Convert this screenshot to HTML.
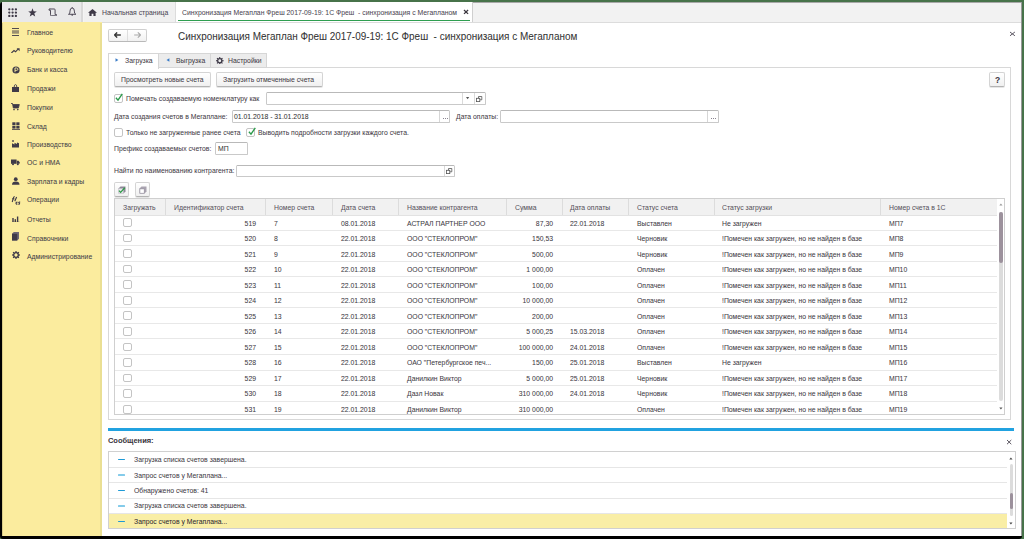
<!DOCTYPE html>
<html><head><meta charset="utf-8"><style>
html,body{margin:0;padding:0;}
body{width:1024px;height:539px;overflow:hidden;position:relative;background:#47734a;font-family:"Liberation Sans",sans-serif;}
.t{position:absolute;white-space:nowrap;-webkit-text-stroke:0.04px currentColor;}
.r{position:absolute;}
</style></head><body>
<div class="r" style="left:0.00px;top:2.00px;width:1022.00px;height:537.00px;background:#000;border-radius:3px 0 3px 3px;"></div>
<div class="r" style="left:2.00px;top:2.00px;width:1020.00px;height:534.00px;background:#fff;"></div>
<div class="r" style="left:1021.00px;top:2.00px;width:1.00px;height:534.00px;background:#9a9a9a;"></div>
<div class="r" style="left:2.00px;top:2.00px;width:1019.00px;height:20.00px;background:#f2f2f2;"></div>
<div class="r" style="left:2.00px;top:2.00px;width:1019.00px;height:1.00px;background:#a8a8a8;"></div>
<div class="r" style="left:2.00px;top:2.00px;width:79.00px;height:20.00px;background:#e9e9ea;"></div>
<div class="r" style="left:80.60px;top:2.00px;width:2.00px;height:20.00px;background:#d8d8d8;"></div>
<div class="r" style="left:82.60px;top:2.00px;width:1.00px;height:20.00px;background:#f4f4f4;"></div>
<div class="r" style="left:83.60px;top:2.00px;width:91.70px;height:20.00px;background:#f0f0f0;"></div>
<div class="r" style="left:175.30px;top:2.00px;width:1.00px;height:20.00px;background:#dcdcdc;"></div>
<div class="r" style="left:176.30px;top:2.00px;width:296.00px;height:20.00px;background:#ffffff;"></div>
<div class="r" style="left:472.30px;top:2.00px;width:1.00px;height:20.00px;background:#cfcfcf;"></div>
<div class="r" style="left:102.00px;top:21.60px;width:919.00px;height:1.00px;background:#dcdcdc;"></div>
<div class="r" style="left:178.00px;top:19.70px;width:292.30px;height:1.50px;background:#2e9e50;"></div>
<svg class="r" style="left:7.80px;top:7.60px" width="9.5" height="9.5" viewBox="0 0 9.5 9.5"><circle cx="1.30" cy="1.30" r="1.15" fill="#3f3a48"/><circle cx="4.60" cy="1.30" r="1.15" fill="#3f3a48"/><circle cx="7.90" cy="1.30" r="1.15" fill="#3f3a48"/><circle cx="1.30" cy="4.60" r="1.15" fill="#3f3a48"/><circle cx="4.60" cy="4.60" r="1.15" fill="#3f3a48"/><circle cx="7.90" cy="4.60" r="1.15" fill="#3f3a48"/><circle cx="1.30" cy="7.90" r="1.15" fill="#3f3a48"/><circle cx="4.60" cy="7.90" r="1.15" fill="#3f3a48"/><circle cx="7.90" cy="7.90" r="1.15" fill="#3f3a48"/></svg>
<svg class="r" style="left:27.80px;top:7.90px" width="9" height="9" viewBox="0 0 9 9"><path d="M4.5 0.3 L5.6 3.3 L8.8 3.4 L6.3 5.3 L7.2 8.5 L4.5 6.7 L1.8 8.5 L2.7 5.3 L0.2 3.4 L3.4 3.3 Z" fill="#3f3a48"/></svg>
<svg class="r" style="left:47.80px;top:7.60px" width="9.5" height="8.6" viewBox="0 0 9.5 8.6"><path d="M1.5 1 H6.3 Q7.1 1 7.1 1.9 V6.6 H8.6 Q8.8 7.8 7.5 7.8 H3.3 Q2.5 7.8 2.5 6.8 V2.3 M2.2 1 Q0.6 0.9 0.9 2.1 Q1.3 2.6 2.5 2.4" fill="none" stroke="#3f3a48" stroke-width="0.9"/></svg>
<svg class="r" style="left:67.80px;top:7.40px" width="8.4" height="8.8" viewBox="0 0 8.4 8.8"><path d="M4.2 0.9 Q6.4 1.1 6.4 4.1 L6.6 6.2 L7.9 7.3 H0.5 L1.8 6.2 L2.0 4.1 Q2.0 1.1 4.2 0.9 Z" fill="none" stroke="#3f3a48" stroke-width="0.9"/><circle cx="4.2" cy="0.8" r="0.6" fill="#3f3a48"/><circle cx="4.2" cy="8" r="0.8" fill="#3f3a48"/></svg>
<svg class="r" style="left:87.80px;top:9.00px" width="9" height="7" viewBox="0 0 9 7"><path d="M4.5 0 L9 3.8 H7.6 V7 H5.4 V4.8 H3.6 V7 H1.4 V3.8 H0 Z" fill="#3f3a48"/></svg>
<div class="t" style="left:101.70px;top:9.00px;font-size:8.0px;line-height:8.0px;color:#4a4652;letter-spacing:0px;transform:scaleX(0.855);transform-origin:0 0;">Начальная страница</div>
<div class="t" style="left:181.90px;top:9.00px;font-size:8.0px;line-height:8.0px;color:#4a4652;letter-spacing:0px;transform:scaleX(0.855);transform-origin:0 0;">Синхронизация Мегаплан Фреш 2017-09-19: 1С Фреш&nbsp; - синхронизация с Мегапланом</div>
<svg class="r" style="left:462.90px;top:9.00px" width="6.1" height="5.9" viewBox="0 0 6.1 5.9"><path d="M1 1 L5.10 4.90 M5.10 1 L1 4.90" stroke="#3d3840" stroke-width="1.3" fill="none"/></svg>
<div class="r" style="left:2.00px;top:21.60px;width:100.00px;height:514.40px;background:#fbec9e;"></div>
<div class="r" style="left:100.00px;top:22.60px;width:2.00px;height:513.40px;background:#eadf93;"></div>
<div class="r" style="left:2.00px;top:22.60px;width:1.00px;height:513.40px;background:#d9cc88;"></div>
<div class="t" style="left:27.40px;top:29.00px;font-size:8.0px;line-height:8.0px;color:#423d48;letter-spacing:0px;transform:scaleX(0.855);transform-origin:0 0;">Главное</div>
<div class="t" style="left:27.40px;top:47.00px;font-size:8.0px;line-height:8.0px;color:#423d48;letter-spacing:0px;transform:scaleX(0.855);transform-origin:0 0;">Руководителю</div>
<div class="t" style="left:27.40px;top:66.00px;font-size:8.0px;line-height:8.0px;color:#423d48;letter-spacing:0px;transform:scaleX(0.855);transform-origin:0 0;">Банк и касса</div>
<div class="t" style="left:27.40px;top:85.00px;font-size:8.0px;line-height:8.0px;color:#423d48;letter-spacing:0px;transform:scaleX(0.855);transform-origin:0 0;">Продажи</div>
<div class="t" style="left:27.40px;top:104.00px;font-size:8.0px;line-height:8.0px;color:#423d48;letter-spacing:0px;transform:scaleX(0.855);transform-origin:0 0;">Покупки</div>
<div class="t" style="left:27.40px;top:123.00px;font-size:8.0px;line-height:8.0px;color:#423d48;letter-spacing:0px;transform:scaleX(0.855);transform-origin:0 0;">Склад</div>
<div class="t" style="left:27.40px;top:141.00px;font-size:8.0px;line-height:8.0px;color:#423d48;letter-spacing:0px;transform:scaleX(0.855);transform-origin:0 0;">Производство</div>
<div class="t" style="left:27.40px;top:159.00px;font-size:8.0px;line-height:8.0px;color:#423d48;letter-spacing:0px;transform:scaleX(0.855);transform-origin:0 0;">ОС и НМА</div>
<div class="t" style="left:27.40px;top:178.00px;font-size:8.0px;line-height:8.0px;color:#423d48;letter-spacing:0px;transform:scaleX(0.855);transform-origin:0 0;">Зарплата и кадры</div>
<div class="t" style="left:27.40px;top:196.00px;font-size:8.0px;line-height:8.0px;color:#423d48;letter-spacing:0px;transform:scaleX(0.855);transform-origin:0 0;">Операции</div>
<div class="t" style="left:27.40px;top:216.00px;font-size:8.0px;line-height:8.0px;color:#423d48;letter-spacing:0px;transform:scaleX(0.855);transform-origin:0 0;">Отчеты</div>
<div class="t" style="left:27.40px;top:235.00px;font-size:8.0px;line-height:8.0px;color:#423d48;letter-spacing:0px;transform:scaleX(0.855);transform-origin:0 0;">Справочники</div>
<div class="t" style="left:27.40px;top:253.00px;font-size:8.0px;line-height:8.0px;color:#423d48;letter-spacing:0px;transform:scaleX(0.855);transform-origin:0 0;">Администрирование</div>
<svg class="r" style="left:11.90px;top:28.10px" width="7.5" height="8" viewBox="0 0 7.5 8"><rect x="0" y="0" width="7.5" height="0.9" fill="#3f3a48"/><rect x="0" y="2.2" width="7.5" height="3.5" fill="#9b9070"/><rect x="0" y="7" width="7.5" height="0.9" fill="#3f3a48"/></svg>
<svg class="r" style="left:11.20px;top:47.60px" width="9" height="5.5" viewBox="0 0 9 5.5"><path d="M0.4 5 L3 2.5 L4.6 3.8 L7 1.2" fill="none" stroke="#3f3a48" stroke-width="1.1"/><path d="M5.6 0.3 H8.6 V3.3 Z" fill="#3f3a48"/></svg>
<svg class="r" style="left:11.80px;top:65.50px" width="8" height="8" viewBox="0 0 8 8"><circle cx="4" cy="4" r="3.6" fill="#3f3a48"/><path d="M3 6.2 V2 H4.6 Q5.9 2 5.9 3.2 Q5.9 4.4 4.6 4.4 H3" fill="none" stroke="#fbec9e" stroke-width="0.9"/></svg>
<svg class="r" style="left:12.00px;top:83.60px" width="7" height="8" viewBox="0 0 7 8"><rect x="0" y="3" width="7" height="5" fill="#3f3a48"/><path d="M2.2 3 Q2.2 0.6 3.5 0.6 Q4.8 0.6 4.8 3" fill="none" stroke="#3f3a48" stroke-width="0.9"/></svg>
<svg class="r" style="left:11.40px;top:103.00px" width="8.5" height="7.5" viewBox="0 0 8.5 7.5"><path d="M0 0.5 H1.5 L2.3 5 H7.4 L8.3 1.5 H1.8" fill="#3f3a48" stroke="#3f3a48" stroke-width="0.8"/><circle cx="3" cy="6.6" r="0.8" fill="#3f3a48"/><circle cx="6.8" cy="6.6" r="0.8" fill="#3f3a48"/></svg>
<svg class="r" style="left:11.60px;top:121.60px" width="8" height="8" viewBox="0 0 8 8"><rect x="0.3" y="0.3" width="3.2" height="2.8" fill="#3f3a48"/><rect x="4.3" y="0.3" width="3.2" height="2.8" fill="#3f3a48"/><rect x="0.3" y="3.8" width="3.2" height="2.8" fill="#3f3a48"/><rect x="4.3" y="3.8" width="3.2" height="2.8" fill="#3f3a48"/><rect x="0" y="7.2" width="8" height="0.8" fill="#3f3a48"/></svg>
<svg class="r" style="left:12.00px;top:140.20px" width="7.5" height="7.5" viewBox="0 0 7.5 7.5"><path d="M0 7.5 V3.2 L2.5 4.5 V2.8 L5 4 V2.5 L7 3.2 V7.5 Z" fill="#3f3a48"/><rect x="0.2" y="0.2" width="1.6" height="1.6" fill="#3f3a48"/></svg>
<svg class="r" style="left:11.20px;top:159.00px" width="9" height="6.5" viewBox="0 0 9 6.5"><rect x="0" y="0.5" width="5.6" height="4.3" fill="#3f3a48"/><path d="M5.9 1.8 H7.6 L8.6 3.2 V4.8 H5.9 Z" fill="#3f3a48"/><circle cx="2" cy="5.3" r="1" fill="#3f3a48"/><circle cx="6.8" cy="5.3" r="1" fill="#3f3a48"/></svg>
<svg class="r" style="left:12.00px;top:177.20px" width="7.5" height="8" viewBox="0 0 7.5 8"><circle cx="3.75" cy="2.2" r="1.9" fill="#3f3a48"/><path d="M0 7.8 Q0 4.6 3.75 4.6 Q7.5 4.6 7.5 7.8 Z" fill="#3f3a48"/></svg>
<svg class="r" style="left:11.00px;top:195.80px" width="10" height="9" viewBox="0 0 10 9"><g fill="none" stroke="#3f3a48" stroke-width="1.1"><path d="M1.2 6 L2.6 1.4 Q2.9 0.6 3.8 0.8"/><path d="M1.2 2.8 H3.4"/><path d="M3.8 5.2 L5.6 1"/><path d="M6.6 6.3 Q5.2 5.9 5.0 7.2 Q5.1 8.4 6.4 8.0"/><path d="M9.2 6.2 Q8 5.8 7.7 6.6 Q8.6 7.2 8.6 7.6 Q8.4 8.5 7.3 8.1"/></g></svg>
<svg class="r" style="left:12.00px;top:215.50px" width="7.5" height="6.5" viewBox="0 0 7.5 6.5"><rect x="0.3" y="2" width="1.4" height="4" fill="#3f3a48"/><rect x="2.6" y="3.2" width="1.4" height="2.8" fill="#3f3a48"/><rect x="4.9" y="0.5" width="1.4" height="5.5" fill="#3f3a48"/><rect x="0" y="5.8" width="7.5" height="0.7" fill="#3f3a48"/></svg>
<svg class="r" style="left:12.20px;top:232.20px" width="7" height="8.5" viewBox="0 0 7 8.5"><path d="M0 1.8 L1.8 0 H7 V6.8 L5.2 8.5 H0 Z" fill="#6d6674"/><rect x="0" y="1.8" width="5.2" height="6.7" fill="#3f3a48"/></svg>
<svg class="r" style="left:11.90px;top:251.30px" width="8" height="8" viewBox="0 0 8 8"><circle cx="4" cy="4" r="2.3" fill="none" stroke="#3f3a48" stroke-width="1.3"/><rect x="3.4" y="-0.1" width="1.2" height="2" fill="#3f3a48" transform="rotate(0 4 4)"/><rect x="3.4" y="-0.1" width="1.2" height="2" fill="#3f3a48" transform="rotate(45 4 4)"/><rect x="3.4" y="-0.1" width="1.2" height="2" fill="#3f3a48" transform="rotate(90 4 4)"/><rect x="3.4" y="-0.1" width="1.2" height="2" fill="#3f3a48" transform="rotate(135 4 4)"/><rect x="3.4" y="-0.1" width="1.2" height="2" fill="#3f3a48" transform="rotate(180 4 4)"/><rect x="3.4" y="-0.1" width="1.2" height="2" fill="#3f3a48" transform="rotate(225 4 4)"/><rect x="3.4" y="-0.1" width="1.2" height="2" fill="#3f3a48" transform="rotate(270 4 4)"/><rect x="3.4" y="-0.1" width="1.2" height="2" fill="#3f3a48" transform="rotate(315 4 4)"/></svg>
<div class="r" style="left:108.30px;top:29.00px;width:38.60px;height:12.50px;background:linear-gradient(#ffffff,#f1f1f1);border:1px solid #cfcfcf;border-bottom-color:#b9b9b9;border-radius:2px;box-sizing:border-box;"></div>
<div class="r" style="left:127.20px;top:30.00px;width:1.00px;height:10.50px;background:#dedede;"></div>
<svg class="r" style="left:114.20px;top:32.30px" width="7" height="6" viewBox="0 0 7 6"><path d="M0.3 3 L3.2 0.4 M0.3 3 L3.2 5.6 M0.5 3 H6.8" fill="none" stroke="#333" stroke-width="1.3"/></svg>
<svg class="r" style="left:133.50px;top:32.30px" width="7" height="6" viewBox="0 0 7 6"><path d="M6.7 3 L3.8 0.4 M6.7 3 L3.8 5.6 M6.5 3 H0.2" fill="none" stroke="#a9a9a9" stroke-width="1.1"/></svg>
<div class="t" style="left:178.00px;top:32.00px;font-size:10px;line-height:10px;color:#333333;letter-spacing:0px;transform:scaleX(0.993);transform-origin:0 0;">Синхронизация Мегаплан Фреш 2017-09-19: 1С Фреш&nbsp; - синхронизация с Мегапланом</div>
<svg class="r" style="left:1009.00px;top:31.00px" width="6.9" height="5.8" viewBox="0 0 6.9 5.8"><path d="M1 1 L5.90 4.80 M5.90 1 L1 4.80" stroke="#5a5560" stroke-width="1.0" fill="none"/></svg>
<div class="r" style="left:108.00px;top:67.40px;width:902.70px;height:352.60px;border:1px solid #d8d8d8;box-sizing:border-box;background:#fff;"></div>
<div class="r" style="left:158.30px;top:53.40px;width:53.00px;height:15.00px;background:#ececec;border:1px solid #d6d6d6;box-sizing:border-box;"></div>
<div class="r" style="left:210.30px;top:53.40px;width:56.70px;height:15.00px;background:#ececec;border:1px solid #d6d6d6;box-sizing:border-box;"></div>
<div class="r" style="left:108.00px;top:53.40px;width:51.30px;height:15.60px;background:#fff;border:1px solid #d6d6d6;border-bottom:none;box-sizing:border-box;"></div>
<svg class="r" style="left:115.00px;top:58.30px" width="4" height="4.5" viewBox="0 0 4 4.5"><path d="M0.5 0.2 L3.4 2 L0.5 3.8 Z" fill="#3a7cc8"/></svg>
<svg class="r" style="left:165.80px;top:58.30px" width="4" height="4.5" viewBox="0 0 4 4.5"><path d="M3.4 0.2 L0.5 2 L3.4 3.8 Z" fill="#3a7cc8"/></svg>
<div class="t" style="left:124.90px;top:57.00px;font-size:8.0px;line-height:8.0px;color:#3f3a45;letter-spacing:0px;transform:scaleX(0.855);transform-origin:0 0;">Загрузка</div>
<div class="t" style="left:176.00px;top:57.00px;font-size:8.0px;line-height:8.0px;color:#3f3a45;letter-spacing:0px;transform:scaleX(0.855);transform-origin:0 0;">Выгрузка</div>
<svg class="r" style="left:216.00px;top:56.80px" width="7.5" height="7.5" viewBox="0 0 7.5 7.5"><circle cx="3.75" cy="3.75" r="2.1" fill="none" stroke="#3f3a48" stroke-width="1.3"/><rect x="3.2" y="-0.1" width="1.1" height="1.9" fill="#3f3a48" transform="rotate(0 3.75 3.75)"/><rect x="3.2" y="-0.1" width="1.1" height="1.9" fill="#3f3a48" transform="rotate(45 3.75 3.75)"/><rect x="3.2" y="-0.1" width="1.1" height="1.9" fill="#3f3a48" transform="rotate(90 3.75 3.75)"/><rect x="3.2" y="-0.1" width="1.1" height="1.9" fill="#3f3a48" transform="rotate(135 3.75 3.75)"/><rect x="3.2" y="-0.1" width="1.1" height="1.9" fill="#3f3a48" transform="rotate(180 3.75 3.75)"/><rect x="3.2" y="-0.1" width="1.1" height="1.9" fill="#3f3a48" transform="rotate(225 3.75 3.75)"/><rect x="3.2" y="-0.1" width="1.1" height="1.9" fill="#3f3a48" transform="rotate(270 3.75 3.75)"/><rect x="3.2" y="-0.1" width="1.1" height="1.9" fill="#3f3a48" transform="rotate(315 3.75 3.75)"/></svg>
<div class="t" style="left:227.70px;top:57.00px;font-size:8.0px;line-height:8.0px;color:#3f3a45;letter-spacing:0px;transform:scaleX(0.855);transform-origin:0 0;">Настройки</div>
<div class="r" style="left:114.10px;top:72.30px;width:97.40px;height:14.50px;background:linear-gradient(#ffffff,#f0f0f0);border:1px solid #d4d4d4;border-bottom-color:#b3b3b3;border-radius:2px;box-sizing:border-box;box-shadow:0 1px 0 #e6e6e6;"></div>
<div class="t" style="left:121.30px;top:76.00px;font-size:8.0px;line-height:8.0px;color:#3f3a45;letter-spacing:0px;transform:scaleX(0.855);transform-origin:0 0;">Просмотреть новые счета</div>
<div class="r" style="left:216.20px;top:72.30px;width:106.40px;height:14.50px;background:linear-gradient(#ffffff,#f0f0f0);border:1px solid #d4d4d4;border-bottom-color:#b3b3b3;border-radius:2px;box-sizing:border-box;box-shadow:0 1px 0 #e6e6e6;"></div>
<div class="t" style="left:223.30px;top:76.00px;font-size:8.0px;line-height:8.0px;color:#3f3a45;letter-spacing:0px;transform:scaleX(0.855);transform-origin:0 0;">Загрузить отмеченные счета</div>
<div class="r" style="left:989.40px;top:72.30px;width:16.10px;height:14.50px;background:linear-gradient(#ffffff,#f0f0f0);border:1px solid #d4d4d4;border-bottom-color:#b3b3b3;border-radius:2px;box-sizing:border-box;box-shadow:0 1px 0 #e6e6e6;"></div>
<div class="t" style="left:995.00px;top:76.00px;font-size:8.5px;line-height:8.5px;color:#3d3843;letter-spacing:0px;transform-origin:0 0;font-weight:bold;">?</div>
<div class="r" style="left:113.90px;top:94.40px;width:8.80px;height:8.70px;border:1px solid #c4c4c4;border-radius:2px;box-sizing:border-box;background:#fff;"></div>
<svg class="r" style="left:115.30px;top:93.30px" width="8" height="8.5" viewBox="0 0 8 8.5"><path d="M0.9 4.8 L3 7.2 L7.3 0.8" fill="none" stroke="#2a9a4a" stroke-width="1.35"/></svg>
<div class="t" style="left:125.60px;top:95.00px;font-size:8.0px;line-height:8.0px;color:#3f3a45;letter-spacing:0px;transform:scaleX(0.855);transform-origin:0 0;">Помечать создаваемую номенклатуру как</div>
<div class="r" style="left:266.20px;top:92.20px;width:219.40px;height:12.60px;border:1px solid #c9c9c9;border-top-color:#b9b9b9;border-radius:1.5px;box-sizing:border-box;background:#fff;"></div>
<div class="r" style="left:462.20px;top:93.20px;width:1.00px;height:10.60px;background:#dadada;"></div>
<div class="r" style="left:473.80px;top:93.20px;width:1.00px;height:10.60px;background:#dadada;"></div>
<svg class="r" style="left:466.30px;top:97.30px" width="3.5" height="3" viewBox="0 0 3.5 3"><path d="M0 0 H3.2 L1.6 2.2 Z" fill="#555"/></svg>
<svg class="r" style="left:476.40px;top:95.60px" width="6.5" height="6" viewBox="0 0 6.5 6"><rect x="0.5" y="2.3" width="3.3" height="3.3" fill="none" stroke="#555" stroke-width="0.8"/><path d="M2.5 2.3 V0.5 H5.8 V3.8 H3.8" fill="none" stroke="#555" stroke-width="0.8"/></svg>
<div class="t" style="left:114.00px;top:113.00px;font-size:8.0px;line-height:8.0px;color:#3f3a45;letter-spacing:0px;transform:scaleX(0.855);transform-origin:0 0;">Дата создания счетов в Мегаплане:</div>
<div class="r" style="left:231.50px;top:110.20px;width:218.90px;height:12.80px;border:1px solid #c9c9c9;border-top-color:#b9b9b9;border-radius:1.5px;box-sizing:border-box;background:#fff;"></div>
<div class="r" style="left:439.40px;top:111.20px;width:1.00px;height:10.80px;background:#d6d6d6;"></div>
<div class="r" style="left:443.00px;top:118.00px;width:1.00px;height:1.00px;background:#8a8590;"></div>
<div class="r" style="left:445.00px;top:118.00px;width:1.00px;height:1.00px;background:#8a8590;"></div>
<div class="r" style="left:447.00px;top:118.00px;width:1.00px;height:1.00px;background:#8a8590;"></div>
<div class="t" style="left:234.00px;top:113.00px;font-size:8.0px;line-height:8.0px;color:#333;letter-spacing:0px;transform:scaleX(0.855);transform-origin:0 0;">01.01.2018 - 31.01.2018</div>
<div class="t" style="left:455.70px;top:113.00px;font-size:8.0px;line-height:8.0px;color:#3f3a45;letter-spacing:0px;transform:scaleX(0.855);transform-origin:0 0;">Дата оплаты:</div>
<div class="r" style="left:500.30px;top:110.20px;width:218.60px;height:12.80px;border:1px solid #c9c9c9;border-top-color:#b9b9b9;border-radius:1.5px;box-sizing:border-box;background:#fff;"></div>
<div class="r" style="left:707.30px;top:111.20px;width:1.00px;height:10.80px;background:#d6d6d6;"></div>
<div class="r" style="left:711.00px;top:118.00px;width:1.00px;height:1.00px;background:#8a8590;"></div>
<div class="r" style="left:713.00px;top:118.00px;width:1.00px;height:1.00px;background:#8a8590;"></div>
<div class="r" style="left:715.00px;top:118.00px;width:1.00px;height:1.00px;background:#8a8590;"></div>
<div class="r" style="left:113.90px;top:128.30px;width:8.80px;height:8.70px;border:1px solid #c4c4c4;border-radius:2px;box-sizing:border-box;background:#fff;"></div>
<div class="t" style="left:125.60px;top:129.00px;font-size:8.0px;line-height:8.0px;color:#3f3a45;letter-spacing:0px;transform:scaleX(0.855);transform-origin:0 0;">Только не загруженные ранее счета</div>
<div class="r" style="left:246.30px;top:128.30px;width:8.80px;height:8.70px;border:1px solid #c4c4c4;border-radius:2px;box-sizing:border-box;background:#fff;"></div>
<svg class="r" style="left:247.70px;top:127.20px" width="8" height="8.5" viewBox="0 0 8 8.5"><path d="M0.9 4.8 L3 7.2 L7.3 0.8" fill="none" stroke="#2a9a4a" stroke-width="1.35"/></svg>
<div class="t" style="left:257.90px;top:129.00px;font-size:8.0px;line-height:8.0px;color:#3f3a45;letter-spacing:0px;transform:scaleX(0.855);transform-origin:0 0;">Выводить подробности загрузки каждого счета.</div>
<div class="t" style="left:114.00px;top:145.00px;font-size:8.0px;line-height:8.0px;color:#3f3a45;letter-spacing:0px;transform:scaleX(0.855);transform-origin:0 0;">Префикс создаваемых счетов:</div>
<div class="r" style="left:215.10px;top:142.30px;width:32.50px;height:12.90px;border:1px solid #c9c9c9;border-top-color:#b9b9b9;border-radius:1.5px;box-sizing:border-box;background:#fff;"></div>
<div class="t" style="left:217.60px;top:145.00px;font-size:8.0px;line-height:8.0px;color:#333;letter-spacing:0px;transform:scaleX(0.855);transform-origin:0 0;">МП</div>
<div class="t" style="left:113.90px;top:167.00px;font-size:8.0px;line-height:8.0px;color:#3f3a45;letter-spacing:0px;transform:scaleX(0.855);transform-origin:0 0;">Найти по наименованию контрагента:</div>
<div class="r" style="left:236.20px;top:164.70px;width:218.50px;height:12.60px;border:1px solid #c9c9c9;border-top-color:#b9b9b9;border-radius:1.5px;box-sizing:border-box;background:#fff;"></div>
<div class="r" style="left:443.60px;top:165.70px;width:1.00px;height:10.60px;background:#dadada;"></div>
<svg class="r" style="left:446.30px;top:168.00px" width="6.5" height="6" viewBox="0 0 6.5 6"><rect x="0.5" y="2.3" width="3.3" height="3.3" fill="none" stroke="#555" stroke-width="0.8"/><path d="M2.5 2.3 V0.5 H5.8 V3.8 H3.8" fill="none" stroke="#555" stroke-width="0.8"/></svg>
<div class="r" style="left:113.90px;top:182.40px;width:15.60px;height:14.20px;background:linear-gradient(#ffffff,#f0f0f0);border:1px solid #d4d4d4;border-bottom-color:#b3b3b3;border-radius:2px;box-sizing:border-box;box-shadow:0 1px 0 #e6e6e6;"></div>
<div class="r" style="left:134.70px;top:182.40px;width:15.60px;height:14.20px;background:linear-gradient(#ffffff,#f0f0f0);border:1px solid #d4d4d4;border-bottom-color:#b3b3b3;border-radius:2px;box-sizing:border-box;box-shadow:0 1px 0 #e6e6e6;"></div>
<svg class="r" style="left:117.50px;top:185.50px" width="8" height="8" viewBox="0 0 8 8"><path d="M0.5 2.5 L2.5 0.5 H7.5 V5.5 L5.5 7.5 H0.5 Z" fill="#8e8898"/><rect x="0.5" y="2.5" width="5" height="5" fill="#e8e8ec"/><path d="M1 4.6 L2.6 6.4 L6.8 1.8" fill="none" stroke="#2e9a47" stroke-width="1.3"/></svg>
<svg class="r" style="left:138.60px;top:185.50px" width="8" height="8" viewBox="0 0 8 8"><path d="M0.5 2.5 L2.5 0.5 H7.5 V5.5 L5.5 7.5 H0.5 Z" fill="#a9a3b0"/><rect x="0.9" y="2.9" width="4.3" height="4.3" fill="#fff" stroke="#8e8898" stroke-width="0.6"/></svg>
<div class="r" style="left:113.80px;top:198.20px;width:891.20px;height:216.40px;border:1px solid #cfcfcf;box-sizing:border-box;background:#fff;"></div>
<div class="r" style="left:114.80px;top:199.20px;width:882.00px;height:15.40px;background:#f1f1f1;"></div>
<div class="r" style="left:114.80px;top:214.60px;width:882.00px;height:1.00px;background:#e2e2e2;"></div>
<div class="r" style="left:164.60px;top:199.20px;width:1.00px;height:15.40px;background:#dcdcdc;"></div>
<div class="r" style="left:265.40px;top:199.20px;width:1.00px;height:15.40px;background:#dcdcdc;"></div>
<div class="r" style="left:332.20px;top:199.20px;width:1.00px;height:15.40px;background:#dcdcdc;"></div>
<div class="r" style="left:398.00px;top:199.20px;width:1.00px;height:15.40px;background:#dcdcdc;"></div>
<div class="r" style="left:506.40px;top:199.20px;width:1.00px;height:15.40px;background:#dcdcdc;"></div>
<div class="r" style="left:561.90px;top:199.20px;width:1.00px;height:15.40px;background:#dcdcdc;"></div>
<div class="r" style="left:627.70px;top:199.20px;width:1.00px;height:15.40px;background:#dcdcdc;"></div>
<div class="r" style="left:713.50px;top:199.20px;width:1.00px;height:15.40px;background:#dcdcdc;"></div>
<div class="r" style="left:880.40px;top:199.20px;width:1.00px;height:15.40px;background:#dcdcdc;"></div>
<div class="t" style="left:122.80px;top:204.00px;font-size:8.0px;line-height:8.0px;color:#57525c;letter-spacing:0px;transform:scaleX(0.855);transform-origin:0 0;">Загружать</div>
<div class="t" style="left:173.50px;top:204.00px;font-size:8.0px;line-height:8.0px;color:#57525c;letter-spacing:0px;transform:scaleX(0.855);transform-origin:0 0;">Идентификатор счета</div>
<div class="t" style="left:273.80px;top:204.00px;font-size:8.0px;line-height:8.0px;color:#57525c;letter-spacing:0px;transform:scaleX(0.855);transform-origin:0 0;">Номер счета</div>
<div class="t" style="left:341.10px;top:204.00px;font-size:8.0px;line-height:8.0px;color:#57525c;letter-spacing:0px;transform:scaleX(0.855);transform-origin:0 0;">Дата счета</div>
<div class="t" style="left:407.20px;top:204.00px;font-size:8.0px;line-height:8.0px;color:#57525c;letter-spacing:0px;transform:scaleX(0.855);transform-origin:0 0;">Название контрагента</div>
<div class="t" style="left:515.10px;top:204.00px;font-size:8.0px;line-height:8.0px;color:#57525c;letter-spacing:0px;transform:scaleX(0.855);transform-origin:0 0;">Сумма</div>
<div class="t" style="left:570.40px;top:204.00px;font-size:8.0px;line-height:8.0px;color:#57525c;letter-spacing:0px;transform:scaleX(0.855);transform-origin:0 0;">Дата оплаты</div>
<div class="t" style="left:636.50px;top:204.00px;font-size:8.0px;line-height:8.0px;color:#57525c;letter-spacing:0px;transform:scaleX(0.855);transform-origin:0 0;">Статус счета</div>
<div class="t" style="left:721.80px;top:204.00px;font-size:8.0px;line-height:8.0px;color:#57525c;letter-spacing:0px;transform:scaleX(0.855);transform-origin:0 0;">Статус загрузки</div>
<div class="t" style="left:889.40px;top:204.00px;font-size:8.0px;line-height:8.0px;color:#57525c;letter-spacing:0px;transform:scaleX(0.855);transform-origin:0 0;">Номер счета в 1С</div>
<div class="r" style="left:114.80px;top:229.56px;width:882.00px;height:1.00px;background:#e8e8e8;"></div>
<div class="r" style="left:122.80px;top:218.10px;width:8.80px;height:8.70px;border:1px solid #c4c4c4;border-radius:2px;box-sizing:border-box;background:#fff;"></div>
<div class="t" style="left:-43.60px;width:300px;text-align:right;top:220.00px;font-size:8.0px;line-height:8.0px;color:#3d3943;letter-spacing:0px;transform:scaleX(0.855);transform-origin:100% 0;">519</div>
<div class="t" style="left:273.80px;top:220.00px;font-size:8.0px;line-height:8.0px;color:#3d3943;letter-spacing:0px;transform:scaleX(0.855);transform-origin:0 0;">7</div>
<div class="t" style="left:341.10px;top:220.00px;font-size:8.0px;line-height:8.0px;color:#3d3943;letter-spacing:0px;transform:scaleX(0.855);transform-origin:0 0;">08.01.2018</div>
<div class="t" style="left:407.20px;top:220.00px;font-size:8.0px;line-height:8.0px;color:#3d3943;letter-spacing:0px;transform:scaleX(0.855);transform-origin:0 0;">АСТРАЛ ПАРТНЕР ООО</div>
<div class="t" style="left:252.80px;width:300px;text-align:right;top:220.00px;font-size:8.0px;line-height:8.0px;color:#3d3943;letter-spacing:0px;transform:scaleX(0.855);transform-origin:100% 0;">87,30</div>
<div class="t" style="left:570.40px;top:220.00px;font-size:8.0px;line-height:8.0px;color:#3d3943;letter-spacing:0px;transform:scaleX(0.855);transform-origin:0 0;">22.01.2018</div>
<div class="t" style="left:636.50px;top:220.00px;font-size:8.0px;line-height:8.0px;color:#3d3943;letter-spacing:0px;transform:scaleX(0.855);transform-origin:0 0;">Выставлен</div>
<div class="t" style="left:721.80px;top:220.00px;font-size:8.0px;line-height:8.0px;color:#3d3943;letter-spacing:0px;transform:scaleX(0.855);transform-origin:0 0;">Не загружен</div>
<div class="t" style="left:889.40px;top:220.00px;font-size:8.0px;line-height:8.0px;color:#3d3943;letter-spacing:0px;transform:scaleX(0.855);transform-origin:0 0;">МП7</div>
<div class="r" style="left:114.80px;top:245.12px;width:882.00px;height:1.00px;background:#e8e8e8;"></div>
<div class="r" style="left:122.80px;top:233.66px;width:8.80px;height:8.70px;border:1px solid #c4c4c4;border-radius:2px;box-sizing:border-box;background:#fff;"></div>
<div class="t" style="left:-43.60px;width:300px;text-align:right;top:235.00px;font-size:8.0px;line-height:8.0px;color:#3d3943;letter-spacing:0px;transform:scaleX(0.855);transform-origin:100% 0;">520</div>
<div class="t" style="left:273.80px;top:235.00px;font-size:8.0px;line-height:8.0px;color:#3d3943;letter-spacing:0px;transform:scaleX(0.855);transform-origin:0 0;">8</div>
<div class="t" style="left:341.10px;top:235.00px;font-size:8.0px;line-height:8.0px;color:#3d3943;letter-spacing:0px;transform:scaleX(0.855);transform-origin:0 0;">22.01.2018</div>
<div class="t" style="left:407.20px;top:235.00px;font-size:8.0px;line-height:8.0px;color:#3d3943;letter-spacing:0px;transform:scaleX(0.855);transform-origin:0 0;">ООО &quot;СТЕКЛОПРОМ&quot;</div>
<div class="t" style="left:252.80px;width:300px;text-align:right;top:235.00px;font-size:8.0px;line-height:8.0px;color:#3d3943;letter-spacing:0px;transform:scaleX(0.855);transform-origin:100% 0;">150,53</div>
<div class="t" style="left:636.50px;top:235.00px;font-size:8.0px;line-height:8.0px;color:#3d3943;letter-spacing:0px;transform:scaleX(0.855);transform-origin:0 0;">Черновик</div>
<div class="t" style="left:721.80px;top:235.00px;font-size:8.0px;line-height:8.0px;color:#3d3943;letter-spacing:0px;transform:scaleX(0.855);transform-origin:0 0;">!Помечен как загружен, но не найден в базе</div>
<div class="t" style="left:889.40px;top:235.00px;font-size:8.0px;line-height:8.0px;color:#3d3943;letter-spacing:0px;transform:scaleX(0.855);transform-origin:0 0;">МП8</div>
<div class="r" style="left:114.80px;top:260.68px;width:882.00px;height:1.00px;background:#e8e8e8;"></div>
<div class="r" style="left:122.80px;top:249.22px;width:8.80px;height:8.70px;border:1px solid #c4c4c4;border-radius:2px;box-sizing:border-box;background:#fff;"></div>
<div class="t" style="left:-43.60px;width:300px;text-align:right;top:251.00px;font-size:8.0px;line-height:8.0px;color:#3d3943;letter-spacing:0px;transform:scaleX(0.855);transform-origin:100% 0;">521</div>
<div class="t" style="left:273.80px;top:251.00px;font-size:8.0px;line-height:8.0px;color:#3d3943;letter-spacing:0px;transform:scaleX(0.855);transform-origin:0 0;">9</div>
<div class="t" style="left:341.10px;top:251.00px;font-size:8.0px;line-height:8.0px;color:#3d3943;letter-spacing:0px;transform:scaleX(0.855);transform-origin:0 0;">22.01.2018</div>
<div class="t" style="left:407.20px;top:251.00px;font-size:8.0px;line-height:8.0px;color:#3d3943;letter-spacing:0px;transform:scaleX(0.855);transform-origin:0 0;">ООО &quot;СТЕКЛОПРОМ&quot;</div>
<div class="t" style="left:252.80px;width:300px;text-align:right;top:251.00px;font-size:8.0px;line-height:8.0px;color:#3d3943;letter-spacing:0px;transform:scaleX(0.855);transform-origin:100% 0;">500,00</div>
<div class="t" style="left:636.50px;top:251.00px;font-size:8.0px;line-height:8.0px;color:#3d3943;letter-spacing:0px;transform:scaleX(0.855);transform-origin:0 0;">Черновик</div>
<div class="t" style="left:721.80px;top:251.00px;font-size:8.0px;line-height:8.0px;color:#3d3943;letter-spacing:0px;transform:scaleX(0.855);transform-origin:0 0;">!Помечен как загружен, но не найден в базе</div>
<div class="t" style="left:889.40px;top:251.00px;font-size:8.0px;line-height:8.0px;color:#3d3943;letter-spacing:0px;transform:scaleX(0.855);transform-origin:0 0;">МП9</div>
<div class="r" style="left:114.80px;top:276.24px;width:882.00px;height:1.00px;background:#e8e8e8;"></div>
<div class="r" style="left:122.80px;top:264.78px;width:8.80px;height:8.70px;border:1px solid #c4c4c4;border-radius:2px;box-sizing:border-box;background:#fff;"></div>
<div class="t" style="left:-43.60px;width:300px;text-align:right;top:266.00px;font-size:8.0px;line-height:8.0px;color:#3d3943;letter-spacing:0px;transform:scaleX(0.855);transform-origin:100% 0;">522</div>
<div class="t" style="left:273.80px;top:266.00px;font-size:8.0px;line-height:8.0px;color:#3d3943;letter-spacing:0px;transform:scaleX(0.855);transform-origin:0 0;">10</div>
<div class="t" style="left:341.10px;top:266.00px;font-size:8.0px;line-height:8.0px;color:#3d3943;letter-spacing:0px;transform:scaleX(0.855);transform-origin:0 0;">22.01.2018</div>
<div class="t" style="left:407.20px;top:266.00px;font-size:8.0px;line-height:8.0px;color:#3d3943;letter-spacing:0px;transform:scaleX(0.855);transform-origin:0 0;">ООО &quot;СТЕКЛОПРОМ&quot;</div>
<div class="t" style="left:252.80px;width:300px;text-align:right;top:266.00px;font-size:8.0px;line-height:8.0px;color:#3d3943;letter-spacing:0px;transform:scaleX(0.855);transform-origin:100% 0;">1 000,00</div>
<div class="t" style="left:636.50px;top:266.00px;font-size:8.0px;line-height:8.0px;color:#3d3943;letter-spacing:0px;transform:scaleX(0.855);transform-origin:0 0;">Оплачен</div>
<div class="t" style="left:721.80px;top:266.00px;font-size:8.0px;line-height:8.0px;color:#3d3943;letter-spacing:0px;transform:scaleX(0.855);transform-origin:0 0;">!Помечен как загружен, но не найден в базе</div>
<div class="t" style="left:889.40px;top:266.00px;font-size:8.0px;line-height:8.0px;color:#3d3943;letter-spacing:0px;transform:scaleX(0.855);transform-origin:0 0;">МП10</div>
<div class="r" style="left:114.80px;top:291.80px;width:882.00px;height:1.00px;background:#e8e8e8;"></div>
<div class="r" style="left:122.80px;top:280.34px;width:8.80px;height:8.70px;border:1px solid #c4c4c4;border-radius:2px;box-sizing:border-box;background:#fff;"></div>
<div class="t" style="left:-43.60px;width:300px;text-align:right;top:282.00px;font-size:8.0px;line-height:8.0px;color:#3d3943;letter-spacing:0px;transform:scaleX(0.855);transform-origin:100% 0;">523</div>
<div class="t" style="left:273.80px;top:282.00px;font-size:8.0px;line-height:8.0px;color:#3d3943;letter-spacing:0px;transform:scaleX(0.855);transform-origin:0 0;">11</div>
<div class="t" style="left:341.10px;top:282.00px;font-size:8.0px;line-height:8.0px;color:#3d3943;letter-spacing:0px;transform:scaleX(0.855);transform-origin:0 0;">22.01.2018</div>
<div class="t" style="left:407.20px;top:282.00px;font-size:8.0px;line-height:8.0px;color:#3d3943;letter-spacing:0px;transform:scaleX(0.855);transform-origin:0 0;">ООО &quot;СТЕКЛОПРОМ&quot;</div>
<div class="t" style="left:252.80px;width:300px;text-align:right;top:282.00px;font-size:8.0px;line-height:8.0px;color:#3d3943;letter-spacing:0px;transform:scaleX(0.855);transform-origin:100% 0;">100,00</div>
<div class="t" style="left:636.50px;top:282.00px;font-size:8.0px;line-height:8.0px;color:#3d3943;letter-spacing:0px;transform:scaleX(0.855);transform-origin:0 0;">Оплачен</div>
<div class="t" style="left:721.80px;top:282.00px;font-size:8.0px;line-height:8.0px;color:#3d3943;letter-spacing:0px;transform:scaleX(0.855);transform-origin:0 0;">!Помечен как загружен, но не найден в базе</div>
<div class="t" style="left:889.40px;top:282.00px;font-size:8.0px;line-height:8.0px;color:#3d3943;letter-spacing:0px;transform:scaleX(0.855);transform-origin:0 0;">МП11</div>
<div class="r" style="left:114.80px;top:307.36px;width:882.00px;height:1.00px;background:#e8e8e8;"></div>
<div class="r" style="left:122.80px;top:295.90px;width:8.80px;height:8.70px;border:1px solid #c4c4c4;border-radius:2px;box-sizing:border-box;background:#fff;"></div>
<div class="t" style="left:-43.60px;width:300px;text-align:right;top:297.00px;font-size:8.0px;line-height:8.0px;color:#3d3943;letter-spacing:0px;transform:scaleX(0.855);transform-origin:100% 0;">524</div>
<div class="t" style="left:273.80px;top:297.00px;font-size:8.0px;line-height:8.0px;color:#3d3943;letter-spacing:0px;transform:scaleX(0.855);transform-origin:0 0;">12</div>
<div class="t" style="left:341.10px;top:297.00px;font-size:8.0px;line-height:8.0px;color:#3d3943;letter-spacing:0px;transform:scaleX(0.855);transform-origin:0 0;">22.01.2018</div>
<div class="t" style="left:407.20px;top:297.00px;font-size:8.0px;line-height:8.0px;color:#3d3943;letter-spacing:0px;transform:scaleX(0.855);transform-origin:0 0;">ООО &quot;СТЕКЛОПРОМ&quot;</div>
<div class="t" style="left:252.80px;width:300px;text-align:right;top:297.00px;font-size:8.0px;line-height:8.0px;color:#3d3943;letter-spacing:0px;transform:scaleX(0.855);transform-origin:100% 0;">10 000,00</div>
<div class="t" style="left:636.50px;top:297.00px;font-size:8.0px;line-height:8.0px;color:#3d3943;letter-spacing:0px;transform:scaleX(0.855);transform-origin:0 0;">Оплачен</div>
<div class="t" style="left:721.80px;top:297.00px;font-size:8.0px;line-height:8.0px;color:#3d3943;letter-spacing:0px;transform:scaleX(0.855);transform-origin:0 0;">!Помечен как загружен, но не найден в базе</div>
<div class="t" style="left:889.40px;top:297.00px;font-size:8.0px;line-height:8.0px;color:#3d3943;letter-spacing:0px;transform:scaleX(0.855);transform-origin:0 0;">МП12</div>
<div class="r" style="left:114.80px;top:322.92px;width:882.00px;height:1.00px;background:#e8e8e8;"></div>
<div class="r" style="left:122.80px;top:311.46px;width:8.80px;height:8.70px;border:1px solid #c4c4c4;border-radius:2px;box-sizing:border-box;background:#fff;"></div>
<div class="t" style="left:-43.60px;width:300px;text-align:right;top:313.00px;font-size:8.0px;line-height:8.0px;color:#3d3943;letter-spacing:0px;transform:scaleX(0.855);transform-origin:100% 0;">525</div>
<div class="t" style="left:273.80px;top:313.00px;font-size:8.0px;line-height:8.0px;color:#3d3943;letter-spacing:0px;transform:scaleX(0.855);transform-origin:0 0;">13</div>
<div class="t" style="left:341.10px;top:313.00px;font-size:8.0px;line-height:8.0px;color:#3d3943;letter-spacing:0px;transform:scaleX(0.855);transform-origin:0 0;">22.01.2018</div>
<div class="t" style="left:407.20px;top:313.00px;font-size:8.0px;line-height:8.0px;color:#3d3943;letter-spacing:0px;transform:scaleX(0.855);transform-origin:0 0;">ООО &quot;СТЕКЛОПРОМ&quot;</div>
<div class="t" style="left:252.80px;width:300px;text-align:right;top:313.00px;font-size:8.0px;line-height:8.0px;color:#3d3943;letter-spacing:0px;transform:scaleX(0.855);transform-origin:100% 0;">200,00</div>
<div class="t" style="left:636.50px;top:313.00px;font-size:8.0px;line-height:8.0px;color:#3d3943;letter-spacing:0px;transform:scaleX(0.855);transform-origin:0 0;">Оплачен</div>
<div class="t" style="left:721.80px;top:313.00px;font-size:8.0px;line-height:8.0px;color:#3d3943;letter-spacing:0px;transform:scaleX(0.855);transform-origin:0 0;">!Помечен как загружен, но не найден в базе</div>
<div class="t" style="left:889.40px;top:313.00px;font-size:8.0px;line-height:8.0px;color:#3d3943;letter-spacing:0px;transform:scaleX(0.855);transform-origin:0 0;">МП13</div>
<div class="r" style="left:114.80px;top:338.48px;width:882.00px;height:1.00px;background:#e8e8e8;"></div>
<div class="r" style="left:122.80px;top:327.02px;width:8.80px;height:8.70px;border:1px solid #c4c4c4;border-radius:2px;box-sizing:border-box;background:#fff;"></div>
<div class="t" style="left:-43.60px;width:300px;text-align:right;top:328.00px;font-size:8.0px;line-height:8.0px;color:#3d3943;letter-spacing:0px;transform:scaleX(0.855);transform-origin:100% 0;">526</div>
<div class="t" style="left:273.80px;top:328.00px;font-size:8.0px;line-height:8.0px;color:#3d3943;letter-spacing:0px;transform:scaleX(0.855);transform-origin:0 0;">14</div>
<div class="t" style="left:341.10px;top:328.00px;font-size:8.0px;line-height:8.0px;color:#3d3943;letter-spacing:0px;transform:scaleX(0.855);transform-origin:0 0;">22.01.2018</div>
<div class="t" style="left:407.20px;top:328.00px;font-size:8.0px;line-height:8.0px;color:#3d3943;letter-spacing:0px;transform:scaleX(0.855);transform-origin:0 0;">ООО &quot;СТЕКЛОПРОМ&quot;</div>
<div class="t" style="left:252.80px;width:300px;text-align:right;top:328.00px;font-size:8.0px;line-height:8.0px;color:#3d3943;letter-spacing:0px;transform:scaleX(0.855);transform-origin:100% 0;">5 000,25</div>
<div class="t" style="left:570.40px;top:328.00px;font-size:8.0px;line-height:8.0px;color:#3d3943;letter-spacing:0px;transform:scaleX(0.855);transform-origin:0 0;">15.03.2018</div>
<div class="t" style="left:636.50px;top:328.00px;font-size:8.0px;line-height:8.0px;color:#3d3943;letter-spacing:0px;transform:scaleX(0.855);transform-origin:0 0;">Оплачен</div>
<div class="t" style="left:721.80px;top:328.00px;font-size:8.0px;line-height:8.0px;color:#3d3943;letter-spacing:0px;transform:scaleX(0.855);transform-origin:0 0;">!Помечен как загружен, но не найден в базе</div>
<div class="t" style="left:889.40px;top:328.00px;font-size:8.0px;line-height:8.0px;color:#3d3943;letter-spacing:0px;transform:scaleX(0.855);transform-origin:0 0;">МП14</div>
<div class="r" style="left:114.80px;top:354.04px;width:882.00px;height:1.00px;background:#e8e8e8;"></div>
<div class="r" style="left:122.80px;top:342.58px;width:8.80px;height:8.70px;border:1px solid #c4c4c4;border-radius:2px;box-sizing:border-box;background:#fff;"></div>
<div class="t" style="left:-43.60px;width:300px;text-align:right;top:344.00px;font-size:8.0px;line-height:8.0px;color:#3d3943;letter-spacing:0px;transform:scaleX(0.855);transform-origin:100% 0;">527</div>
<div class="t" style="left:273.80px;top:344.00px;font-size:8.0px;line-height:8.0px;color:#3d3943;letter-spacing:0px;transform:scaleX(0.855);transform-origin:0 0;">15</div>
<div class="t" style="left:341.10px;top:344.00px;font-size:8.0px;line-height:8.0px;color:#3d3943;letter-spacing:0px;transform:scaleX(0.855);transform-origin:0 0;">22.01.2018</div>
<div class="t" style="left:407.20px;top:344.00px;font-size:8.0px;line-height:8.0px;color:#3d3943;letter-spacing:0px;transform:scaleX(0.855);transform-origin:0 0;">ООО &quot;СТЕКЛОПРОМ&quot;</div>
<div class="t" style="left:252.80px;width:300px;text-align:right;top:344.00px;font-size:8.0px;line-height:8.0px;color:#3d3943;letter-spacing:0px;transform:scaleX(0.855);transform-origin:100% 0;">100 000,00</div>
<div class="t" style="left:570.40px;top:344.00px;font-size:8.0px;line-height:8.0px;color:#3d3943;letter-spacing:0px;transform:scaleX(0.855);transform-origin:0 0;">24.01.2018</div>
<div class="t" style="left:636.50px;top:344.00px;font-size:8.0px;line-height:8.0px;color:#3d3943;letter-spacing:0px;transform:scaleX(0.855);transform-origin:0 0;">Оплачен</div>
<div class="t" style="left:721.80px;top:344.00px;font-size:8.0px;line-height:8.0px;color:#3d3943;letter-spacing:0px;transform:scaleX(0.855);transform-origin:0 0;">!Помечен как загружен, но не найден в базе</div>
<div class="t" style="left:889.40px;top:344.00px;font-size:8.0px;line-height:8.0px;color:#3d3943;letter-spacing:0px;transform:scaleX(0.855);transform-origin:0 0;">МП15</div>
<div class="r" style="left:114.80px;top:369.60px;width:882.00px;height:1.00px;background:#e8e8e8;"></div>
<div class="r" style="left:122.80px;top:358.14px;width:8.80px;height:8.70px;border:1px solid #c4c4c4;border-radius:2px;box-sizing:border-box;background:#fff;"></div>
<div class="t" style="left:-43.60px;width:300px;text-align:right;top:359.00px;font-size:8.0px;line-height:8.0px;color:#3d3943;letter-spacing:0px;transform:scaleX(0.855);transform-origin:100% 0;">528</div>
<div class="t" style="left:273.80px;top:359.00px;font-size:8.0px;line-height:8.0px;color:#3d3943;letter-spacing:0px;transform:scaleX(0.855);transform-origin:0 0;">16</div>
<div class="t" style="left:341.10px;top:359.00px;font-size:8.0px;line-height:8.0px;color:#3d3943;letter-spacing:0px;transform:scaleX(0.855);transform-origin:0 0;">22.01.2018</div>
<div class="t" style="left:407.20px;top:359.00px;font-size:8.0px;line-height:8.0px;color:#3d3943;letter-spacing:0px;transform:scaleX(0.855);transform-origin:0 0;">ОАО &quot;Петербургское печ...</div>
<div class="t" style="left:252.80px;width:300px;text-align:right;top:359.00px;font-size:8.0px;line-height:8.0px;color:#3d3943;letter-spacing:0px;transform:scaleX(0.855);transform-origin:100% 0;">150,00</div>
<div class="t" style="left:570.40px;top:359.00px;font-size:8.0px;line-height:8.0px;color:#3d3943;letter-spacing:0px;transform:scaleX(0.855);transform-origin:0 0;">25.01.2018</div>
<div class="t" style="left:636.50px;top:359.00px;font-size:8.0px;line-height:8.0px;color:#3d3943;letter-spacing:0px;transform:scaleX(0.855);transform-origin:0 0;">Выставлен</div>
<div class="t" style="left:721.80px;top:359.00px;font-size:8.0px;line-height:8.0px;color:#3d3943;letter-spacing:0px;transform:scaleX(0.855);transform-origin:0 0;">Не загружен</div>
<div class="t" style="left:889.40px;top:359.00px;font-size:8.0px;line-height:8.0px;color:#3d3943;letter-spacing:0px;transform:scaleX(0.855);transform-origin:0 0;">МП16</div>
<div class="r" style="left:114.80px;top:385.16px;width:882.00px;height:1.00px;background:#e8e8e8;"></div>
<div class="r" style="left:122.80px;top:373.70px;width:8.80px;height:8.70px;border:1px solid #c4c4c4;border-radius:2px;box-sizing:border-box;background:#fff;"></div>
<div class="t" style="left:-43.60px;width:300px;text-align:right;top:375.00px;font-size:8.0px;line-height:8.0px;color:#3d3943;letter-spacing:0px;transform:scaleX(0.855);transform-origin:100% 0;">529</div>
<div class="t" style="left:273.80px;top:375.00px;font-size:8.0px;line-height:8.0px;color:#3d3943;letter-spacing:0px;transform:scaleX(0.855);transform-origin:0 0;">17</div>
<div class="t" style="left:341.10px;top:375.00px;font-size:8.0px;line-height:8.0px;color:#3d3943;letter-spacing:0px;transform:scaleX(0.855);transform-origin:0 0;">22.01.2018</div>
<div class="t" style="left:407.20px;top:375.00px;font-size:8.0px;line-height:8.0px;color:#3d3943;letter-spacing:0px;transform:scaleX(0.855);transform-origin:0 0;">Данилкин Виктор</div>
<div class="t" style="left:252.80px;width:300px;text-align:right;top:375.00px;font-size:8.0px;line-height:8.0px;color:#3d3943;letter-spacing:0px;transform:scaleX(0.855);transform-origin:100% 0;">5 000,00</div>
<div class="t" style="left:570.40px;top:375.00px;font-size:8.0px;line-height:8.0px;color:#3d3943;letter-spacing:0px;transform:scaleX(0.855);transform-origin:0 0;">25.01.2018</div>
<div class="t" style="left:636.50px;top:375.00px;font-size:8.0px;line-height:8.0px;color:#3d3943;letter-spacing:0px;transform:scaleX(0.855);transform-origin:0 0;">Черновик</div>
<div class="t" style="left:721.80px;top:375.00px;font-size:8.0px;line-height:8.0px;color:#3d3943;letter-spacing:0px;transform:scaleX(0.855);transform-origin:0 0;">!Помечен как загружен, но не найден в базе</div>
<div class="t" style="left:889.40px;top:375.00px;font-size:8.0px;line-height:8.0px;color:#3d3943;letter-spacing:0px;transform:scaleX(0.855);transform-origin:0 0;">МП17</div>
<div class="r" style="left:114.80px;top:400.72px;width:882.00px;height:1.00px;background:#e8e8e8;"></div>
<div class="r" style="left:122.80px;top:389.26px;width:8.80px;height:8.70px;border:1px solid #c4c4c4;border-radius:2px;box-sizing:border-box;background:#fff;"></div>
<div class="t" style="left:-43.60px;width:300px;text-align:right;top:390.00px;font-size:8.0px;line-height:8.0px;color:#3d3943;letter-spacing:0px;transform:scaleX(0.855);transform-origin:100% 0;">530</div>
<div class="t" style="left:273.80px;top:390.00px;font-size:8.0px;line-height:8.0px;color:#3d3943;letter-spacing:0px;transform:scaleX(0.855);transform-origin:0 0;">18</div>
<div class="t" style="left:341.10px;top:390.00px;font-size:8.0px;line-height:8.0px;color:#3d3943;letter-spacing:0px;transform:scaleX(0.855);transform-origin:0 0;">22.01.2018</div>
<div class="t" style="left:407.20px;top:390.00px;font-size:8.0px;line-height:8.0px;color:#3d3943;letter-spacing:0px;transform:scaleX(0.855);transform-origin:0 0;">Дазл Новак</div>
<div class="t" style="left:252.80px;width:300px;text-align:right;top:390.00px;font-size:8.0px;line-height:8.0px;color:#3d3943;letter-spacing:0px;transform:scaleX(0.855);transform-origin:100% 0;">310 000,00</div>
<div class="t" style="left:570.40px;top:390.00px;font-size:8.0px;line-height:8.0px;color:#3d3943;letter-spacing:0px;transform:scaleX(0.855);transform-origin:0 0;">24.01.2018</div>
<div class="t" style="left:636.50px;top:390.00px;font-size:8.0px;line-height:8.0px;color:#3d3943;letter-spacing:0px;transform:scaleX(0.855);transform-origin:0 0;">Черновик</div>
<div class="t" style="left:721.80px;top:390.00px;font-size:8.0px;line-height:8.0px;color:#3d3943;letter-spacing:0px;transform:scaleX(0.855);transform-origin:0 0;">!Помечен как загружен, но не найден в базе</div>
<div class="t" style="left:889.40px;top:390.00px;font-size:8.0px;line-height:8.0px;color:#3d3943;letter-spacing:0px;transform:scaleX(0.855);transform-origin:0 0;">МП18</div>
<div class="r" style="left:122.80px;top:404.82px;width:8.80px;height:8.70px;border:1px solid #c4c4c4;border-radius:2px;box-sizing:border-box;background:#fff;"></div>
<div class="t" style="left:-43.60px;width:300px;text-align:right;top:406.00px;font-size:8.0px;line-height:8.0px;color:#3d3943;letter-spacing:0px;transform:scaleX(0.855);transform-origin:100% 0;">531</div>
<div class="t" style="left:273.80px;top:406.00px;font-size:8.0px;line-height:8.0px;color:#3d3943;letter-spacing:0px;transform:scaleX(0.855);transform-origin:0 0;">19</div>
<div class="t" style="left:341.10px;top:406.00px;font-size:8.0px;line-height:8.0px;color:#3d3943;letter-spacing:0px;transform:scaleX(0.855);transform-origin:0 0;">22.01.2018</div>
<div class="t" style="left:407.20px;top:406.00px;font-size:8.0px;line-height:8.0px;color:#3d3943;letter-spacing:0px;transform:scaleX(0.855);transform-origin:0 0;">Данилкин Виктор</div>
<div class="t" style="left:252.80px;width:300px;text-align:right;top:406.00px;font-size:8.0px;line-height:8.0px;color:#3d3943;letter-spacing:0px;transform:scaleX(0.855);transform-origin:100% 0;">310 000,00</div>
<div class="t" style="left:636.50px;top:406.00px;font-size:8.0px;line-height:8.0px;color:#3d3943;letter-spacing:0px;transform:scaleX(0.855);transform-origin:0 0;">Оплачен</div>
<div class="t" style="left:721.80px;top:406.00px;font-size:8.0px;line-height:8.0px;color:#3d3943;letter-spacing:0px;transform:scaleX(0.855);transform-origin:0 0;">!Помечен как загружен, но не найден в базе</div>
<div class="t" style="left:889.40px;top:406.00px;font-size:8.0px;line-height:8.0px;color:#3d3943;letter-spacing:0px;transform:scaleX(0.855);transform-origin:0 0;">МП19</div>
<div class="r" style="left:114.80px;top:413.60px;width:889.20px;height:1.00px;background:#cfcfcf;"></div>
<svg class="r" style="left:999.30px;top:203.00px" width="4" height="3" viewBox="0 0 4 3"><path d="M0.3 2.6 H3.5 L1.9 0.4 Z" fill="#9a9a9a"/></svg>
<div class="r" style="left:999.30px;top:211.70px;width:3.80px;height:189.70px;background:#dcdcdc;border-radius:2px;"></div>
<div class="r" style="left:999.30px;top:211.70px;width:3.80px;height:51.00px;background:#9c919c;border-radius:2px;"></div>
<svg class="r" style="left:999.30px;top:406.50px" width="4" height="3" viewBox="0 0 4 3"><path d="M0.3 0.4 H3.5 L1.9 2.6 Z" fill="#555"/></svg>
<div class="r" style="left:107.90px;top:428.20px;width:906.50px;height:3.00px;background:#21a2e0;"></div>
<div class="t" style="left:107.90px;top:437.00px;font-size:7.5px;line-height:7.5px;color:#3a3640;letter-spacing:0px;transform-origin:0 0;font-weight:bold;">Сообщения:</div>
<svg class="r" style="left:1005.90px;top:438.60px" width="6.3" height="6.2" viewBox="0 0 6.3 6.2"><path d="M1 1 L5.30 5.20 M5.30 1 L1 5.20" stroke="#5a5560" stroke-width="1.0" fill="none"/></svg>
<div class="r" style="left:108.00px;top:451.20px;width:907.50px;height:78.10px;border:1px solid #d0d0d0;box-sizing:border-box;background:#fff;"></div>
<div class="r" style="left:109.00px;top:513.80px;width:898.40px;height:14.50px;background:#f9eea6;"></div>
<div class="r" style="left:118.20px;top:458.50px;width:6.40px;height:1.50px;background:#1e9ad6;border-radius:0.5px;"></div>
<div class="t" style="left:133.80px;top:456.00px;font-size:8.0px;line-height:8.0px;color:#3d3943;letter-spacing:0px;transform:scaleX(0.855);transform-origin:0 0;">Загрузка списка счетов завершена.</div>
<div class="r" style="left:109.00px;top:466.60px;width:898.40px;height:1.00px;background:#e6e6e6;"></div>
<div class="r" style="left:118.20px;top:474.40px;width:6.40px;height:1.50px;background:#84cbea;border-radius:0.5px;"></div>
<div class="t" style="left:133.80px;top:472.00px;font-size:8.0px;line-height:8.0px;color:#3d3943;letter-spacing:0px;transform:scaleX(0.855);transform-origin:0 0;">Запрос счетов у Мегаплана...</div>
<div class="r" style="left:109.00px;top:481.90px;width:898.40px;height:1.00px;background:#e6e6e6;"></div>
<div class="r" style="left:118.20px;top:489.70px;width:6.40px;height:1.50px;background:#1e9ad6;border-radius:0.5px;"></div>
<div class="t" style="left:133.80px;top:487.00px;font-size:8.0px;line-height:8.0px;color:#3d3943;letter-spacing:0px;transform:scaleX(0.855);transform-origin:0 0;">Обнаружено счетов: 41</div>
<div class="r" style="left:109.00px;top:497.50px;width:898.40px;height:1.00px;background:#e6e6e6;"></div>
<div class="r" style="left:118.20px;top:505.30px;width:6.40px;height:1.50px;background:#84cbea;border-radius:0.5px;"></div>
<div class="t" style="left:133.80px;top:502.00px;font-size:8.0px;line-height:8.0px;color:#3d3943;letter-spacing:0px;transform:scaleX(0.855);transform-origin:0 0;">Загрузка списка счетов завершена.</div>
<div class="r" style="left:109.00px;top:512.90px;width:898.40px;height:1.00px;background:#e6e6e6;"></div>
<div class="r" style="left:118.20px;top:520.70px;width:6.40px;height:1.50px;background:#1e9ad6;border-radius:0.5px;"></div>
<div class="t" style="left:133.80px;top:518.00px;font-size:8.0px;line-height:8.0px;color:#2c2830;letter-spacing:0px;transform:scaleX(0.855);transform-origin:0 0;">Запрос счетов у Мегаплана...</div>
<svg class="r" style="left:1009.30px;top:456.50px" width="4" height="3" viewBox="0 0 4 3"><path d="M0.3 2.6 H3.5 L1.9 0.4 Z" fill="#444"/></svg>
<div class="r" style="left:1009.50px;top:464.10px;width:3.50px;height:52.40px;background:#dcdcdc;border-radius:2px;"></div>
<div class="r" style="left:1009.50px;top:492.80px;width:3.50px;height:16.20px;background:#9c919c;border-radius:2px;"></div>
<svg class="r" style="left:1009.30px;top:521.80px" width="4" height="3" viewBox="0 0 4 3"><path d="M0.3 0.4 H3.5 L1.9 2.6 Z" fill="#444"/></svg>
</body></html>
